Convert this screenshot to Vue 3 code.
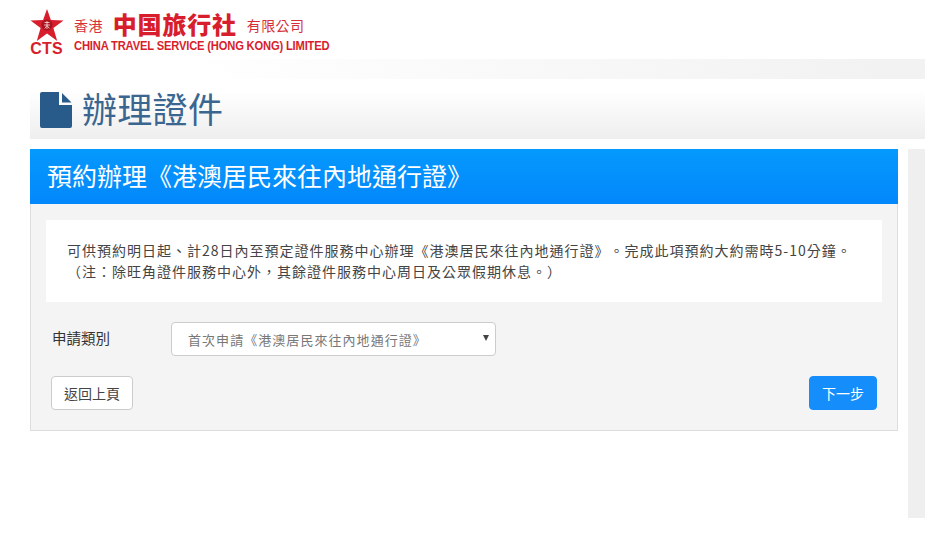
<script setup>
const notice = [
  '可供預約明日起、計28日內至預定證件服務中心辦理《港澳居民來往內地通行證》。完成此項預約大約需時5-10分鐘。',
  '（注：除旺角證件服務中心外，其餘證件服務中心周日及公眾假期休息。）'
]
</script>

<template>
  <div class="page">
    <header class="brand">
      <div class="mark">
        <svg class="star" viewBox="0 0 34 32" width="34" height="32" aria-hidden="true">
          <polygon points="17,0 20.9,11 33.5,11.5 23.4,19 27.2,32 17,24.4 6.8,32 10.6,19 0.5,11.5 13.1,11" fill="#d81e2c" />
          <circle cx="17" cy="16" r="5.6" fill="#a8141f" />
          <path d="M14.5 13.5h5M14 16h6M17 12v8M14.8 19.5l2.2-3 2.4 3" fill="none" stroke="#f6c9cb" stroke-width="0.9" />
        </svg>
        <span class="cts">CTS</span>
      </div>
      <div class="names">
        <div class="zh">
          <span class="zh-small">香港</span>
          <span class="zh-big">中国旅行社</span>
          <span class="zh-small">有限公司</span>
        </div>
        <div class="en">CHINA TRAVEL SERVICE (HONG KONG) LIMITED</div>
      </div>
    </header>

    <div class="band"></div>

    <div class="titlebar">
      <svg class="file" viewBox="0 0 32 36" width="32" height="36" aria-hidden="true">
        <path d="M2 0H19V13H32V34a2 2 0 0 1-2 2H2a2 2 0 0 1-2-2V2a2 2 0 0 1 2-2Z" fill="#285a8a" />
        <path d="M22 1 31.5 10.5H22Z" fill="#285a8a" />
      </svg>
      <h1>辦理證件</h1>
    </div>

    <div class="content">
      <main class="panel">
        <div class="panel-head">預約辦理《港澳居民來往內地通行證》</div>
        <div class="panel-body">
          <div class="notice">
            <p v-for="line in notice" :key="line">{{ line }}</p>
          </div>
          <div class="field">
            <label class="field-label" for="kind">申請類別</label>
            <div class="select" id="kind">
              <span>首次申請《港澳居民來往內地通行證》</span>
              <i class="caret"></i>
            </div>
          </div>
          <div class="actions">
            <button class="btn btn-back" type="button">返回上頁</button>
            <button class="btn btn-next" type="button">下一步</button>
          </div>
        </div>
      </main>
      <aside class="rail"></aside>
    </div>
  </div>
</template>

<style>
html, body { margin: 0; background: #fff; overflow: hidden; }
</style>

<style scoped>
.page {
  width: 925px;
  height: 533px;
  overflow: hidden;
  background: #fff;
  font-family: "Liberation Sans", "Noto Sans CJK TC", sans-serif;
  text-spacing-trim: space-all;
}
.brand {
  height: 59px;
  box-sizing: border-box;
  padding: 9px 0 0 30px;
  display: flex;
  gap: 11px;
  color: #d81e2c;
}
.mark {
  width: 33px;
  display: flex;
  flex-direction: column;
  align-items: center;
}
.star { display: block; flex: none; }
.cts {
  font-size: 16px;
  line-height: 14px;
  margin-top: 1px;
  font-weight: 700;
  letter-spacing: 0.2px;
}
.names { padding-top: 3px; }
.zh {
  display: flex;
  align-items: center;
  height: 26px;
  gap: 10px;
}
.zh-small {
  font-size: 14px;
  letter-spacing: 0.4px;
  color: #d5303a;
}
.zh-big {
  font-family: "Noto Sans CJK TC", sans-serif;
  font-weight: 900;
  font-size: 24px;
  line-height: 25px;
  letter-spacing: 0.8px;
  margin-top: -4px;
}
.en {
  font-size: 13px;
  line-height: 14px;
  font-weight: 700;
  letter-spacing: -0.2px;
  margin-top: 1px;
  white-space: nowrap;
  transform: scaleX(0.86);
  transform-origin: left center;
  width: 257px;
}
.band {
  height: 20px;
  background: linear-gradient(to right, #fff 20%, #f2f2f2 95%);
}
.titlebar {
  margin-left: 30px;
  height: 60px;
  box-sizing: border-box;
  padding: 13px 0 0 10px;
  display: flex;
  gap: 10px;
  background: linear-gradient(to bottom, #fff 20%, #eee 100%);
}
.file { flex: none; }
h1 {
  margin: 0;
  font-family: "Noto Sans CJK TC", sans-serif;
  font-weight: 400;
  font-size: 35px;
  letter-spacing: 0.3px;
  line-height: 32px;
  color: #3a6690;
}
.content {
  margin: 10px 0 0 30px;
  display: flex;
  gap: 10px;
  align-items: flex-start;
}
.panel {
  width: 868px;
  flex: none;
}
.panel-head {
  height: 55px;
  box-sizing: border-box;
  padding-left: 17px;
  line-height: 53px;
  font-family: "Noto Sans CJK TC", sans-serif;
  font-size: 25px;
  color: #fff;
  background: linear-gradient(to bottom, #0599fd, #0387fb);
}
.panel-body {
  height: 227px;
  box-sizing: border-box;
  padding: 16px 15px 0 15px;
  background: #f4f4f4;
  border: 1px solid #ddd;
  border-top: 0;
}
.notice {
  height: 82px;
  box-sizing: border-box;
  padding: 20px 21px 0;
  background: #fff;
  font-size: 14px;
  line-height: 21px;
  letter-spacing: 1px;
  color: #444;
  font-family: "Noto Sans CJK TC", sans-serif;
}
.notice p { margin: 0; white-space: nowrap; }
.field {
  display: flex;
  align-items: center;
  margin: 20px 0 0 6px;
}
.field-label {
  width: 119px;
  font-size: 14.5px;
  color: #333;
  font-family: "Noto Sans CJK TC", sans-serif;
  margin-top: -4px;
}
.select {
  width: 325px;
  height: 34px;
  box-sizing: border-box;
  padding-left: 16px;
  display: flex;
  align-items: center;
  justify-content: space-between;
  background: #fff;
  border: 1px solid #ccc;
  border-radius: 4px;
  font-size: 13px;
  color: #777;
  font-family: "Noto Sans CJK TC", sans-serif;
  letter-spacing: 1.05px;
}
.caret {
  margin-right: 6px;
  margin-top: -2px;
  width: 0;
  height: 0;
  border-left: 3px solid transparent;
  border-right: 3px solid transparent;
  border-top: 6px solid #444;
}
.actions {
  display: flex;
  justify-content: space-between;
  margin: 20px 5px 0 5px;
}
.btn {
  height: 34px;
  padding: 0;
  border-radius: 4px;
  font-size: 14px;
  font-family: "Noto Sans CJK TC", sans-serif;
  box-sizing: border-box;
}
.btn-back {
  width: 82px;
  background: #fff;
  border: 1px solid #ccc;
  color: #444;
}
.btn-next {
  width: 68px;
  background: #158efc;
  border: 1px solid #158efc;
  color: #fff;
}
.rail {
  width: 17px;
  height: 369px;
  background: #efefef;
}
</style>
